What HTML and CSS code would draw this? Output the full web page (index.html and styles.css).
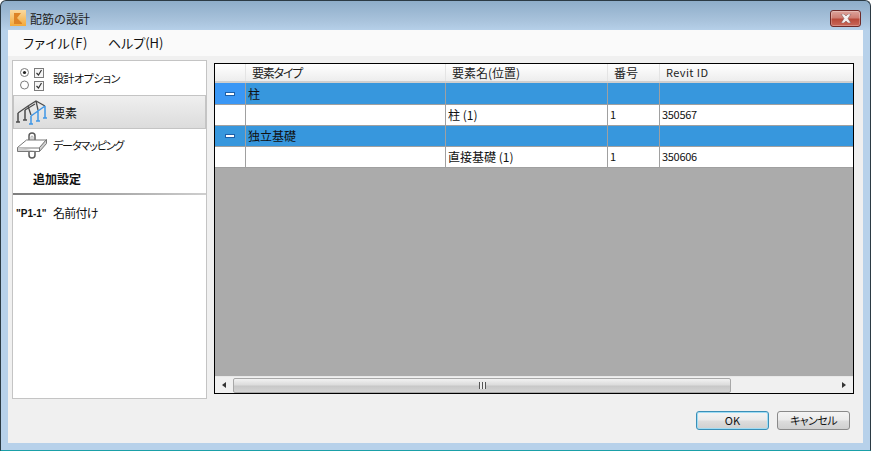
FILE: index.html
```html
<!DOCTYPE html>
<html lang="ja">
<head>
<meta charset="utf-8">
<title>配筋の設計</title>
<link rel="stylesheet" href="styles.css">
</head>
<body>
<div class="window">
  <div class="titlebar">
    <svg class="appicon" width="16" height="16" viewBox="0 0 16 16">
      <defs><linearGradient id="ag" x1="0" y1="0" x2="0" y2="1"><stop offset="0" stop-color="#f9d9a0"/><stop offset="1" stop-color="#f3a93a"/></linearGradient></defs>
      <rect width="16" height="16" fill="url(#ag)"/>
      <path d="M4 3h7L7 8l5 5v1H4z" fill="#dd8326"/>
    </svg>
    <span class="title">配筋の設計</span>
    <div class="close"><svg width="12" height="9" viewBox="0 0 12 9"><path d="M1 0h3l2 2 2-2h3L8 4.500 11 9H8L6 7 4 9H1l3-4.500z" fill="#f4f0f0" stroke="#7a4a48" stroke-width=".5"/></svg></div>
  </div>
  <div class="client">
    <div class="menubar"><span class="menu menu-file">ファイル(F)</span><span class="menu">ヘルプ(H)</span></div>
    <div class="main">
      <div class="sidebar">
        <div class="nav nav-options">
          <svg width="27" height="32" viewBox="0 0 27 32" class="navicon-options">
            <g fill="#fff" stroke="#7c7c7c">
              <circle cx="5.500" cy="10.500" r="4"/><circle cx="5.500" cy="23" r="4"/>
              <rect x="15.500" y="6.500" width="9" height="9" fill="#f6f6f6"/><rect x="15.500" y="19.500" width="9" height="9" fill="#f6f6f6"/>
            </g>
            <circle cx="5.500" cy="10.500" r="1.600" fill="#222"/>
            <path d="M17.500 11l2 2 3-5M17.500 24l2 2 3-5" fill="none" stroke="#333" stroke-width="1.200"/>
          </svg>
          <span class="tight-a">設計オプション</span>
        </div>
        <div class="nav nav-selected">
          <svg width="36" height="32" viewBox="0 0 36 32" class="navicon">
            <path d="M2 17L12 10 20 5l9 5M9 14l10-6M12 10l3 9M20 5l2 9" fill="none" stroke="#4c4c4c" stroke-width="1.300"/>
            <path d="M2 17v9M0 26h4M9 14v10M7 24h4" fill="none" stroke="#4c4c4c" stroke-width="1.500"/>
            <path d="M15 20l14-10M15 20v8M13 28h4M22 14v11M20 25h4M29 10v12M27 22h4" fill="none" stroke="#3f96e6" stroke-width="1.500"/>
          </svg>
          <span>要素</span>
        </div>
        <div class="nav nav-map">
          <svg width="36" height="32" viewBox="0 0 36 32" class="navicon">
            <path d="M13 12V7a3 3 0 0 1 6 0v6" fill="none" stroke="#5c5c5c" stroke-width="1.500"/>
            <path d="M15 11V8a1 1 0 0 1 2 0v3" fill="none" stroke="#aaa"/>
            <path d="M1.500 18.500l9-7.500h20l-7 8H1.500z" fill="#fff" stroke="#777"/>
            <path d="M1.500 18.500v4h22v-4l7-8v4l-7 8" fill="#cfcfcf" stroke="#777"/>
            <path d="M13 23v3a3 3 0 0 0 6 0v-3" fill="none" stroke="#5c5c5c" stroke-width="1.500"/>
          </svg>
          <span class="tight-b">データマッピング</span>
        </div>
        <div class="section">追加設定</div>
        <div class="nav nav-name"><b class="p1">"P1-1"</b><span class="tight-c">名前付け</span></div>
      </div>
      <div class="grid">
        <div class="row header">
          <div class="c c0"></div><div class="c c1 hd-type">要素タイプ</div><div class="c c2">要素名(位置)</div><div class="c c3">番号</div><div class="c c4">Revit ID</div>
        </div>
        <div class="row group first">
          <div class="c c0 c0-active"><i class="minus"></i></div><div class="c c1">柱</div><div class="c c2"></div><div class="c c3"></div><div class="c c4"></div>
        </div>
        <div class="row">
          <div class="c c0"></div><div class="c c1"></div><div class="c c2">柱 (1)</div><div class="c c3 num">1</div><div class="c c4 num">350567</div>
        </div>
        <div class="row group">
          <div class="c c0"><i class="minus"></i></div><div class="c c1">独立基礎</div><div class="c c2"></div><div class="c c3"></div><div class="c c4"></div>
        </div>
        <div class="row">
          <div class="c c0"></div><div class="c c1"></div><div class="c c2">直接基礎 (1)</div><div class="c c3 num">1</div><div class="c c4 num">350606</div>
        </div>
        <div class="empty"></div>
        <div class="scrollbar">
          <div class="arrow arrow-left"></div>
          <div class="thumb"><span class="grip"></span></div>
          <div class="track"></div>
          <div class="arrow arrow-right"></div>
        </div>
      </div>
    </div>
    <div class="footer">
      <button class="btn btn-ok">OK</button>
      <button class="btn btn-cancel">キャンセル</button>
    </div>
  </div>
</div>
</body>
</html>
```
FILE: styles.css
```css
* { box-sizing: border-box; }
html, body { margin: 0; padding: 0; width: 871px; height: 451px; overflow: hidden; background: #fff; }
body { font-family: "Noto Sans CJK JP", "Liberation Sans", sans-serif; font-size: 12px; color: #111; font-feature-settings: "palt"; }
.window {
  width: 871px; height: 451px; display: flex; flex-direction: column;
  border: 1px solid #2b3a44; border-radius: 6px 6px 0 0; border-bottom-color: #1aa0a8;
  background: linear-gradient(#8eadc9 0, #a9c3dc 20px, #b7d1ea 30px);
  padding: 0 7px 7px;
}
.titlebar { height: 29px; flex: none; display: flex; align-items: center; padding: 0 0 0 2px; }
.appicon { flex: none; margin-top: 5px; }
.title { margin-left: 4px; font-size: 12px; color: #222; margin-top: 5px; font-feature-settings: normal; }
.close {
  margin-left: auto; margin-right: 2px; width: 31px; height: 17px; flex: none;
  align-self: flex-start; margin-top: 9px;
  display: flex; align-items: center; justify-content: center;
  border: 1px solid #6e2a28; border-radius: 3px;
  box-shadow: inset 0 0 0 1px rgba(255,255,255,.25);
  background: linear-gradient(#dca49c 0, #cf7f74 45%, #b84a3a 55%, #c9685a 100%);
}
.client { flex: 1; background: #f0f0f0; display: flex; flex-direction: column; min-height: 0; }
.menubar { height: 26px; flex: none; background: #fafafa; display: flex; align-items: center; padding-left: 15px; gap: 20px; }
.menu { font-size: 13px; color: #111; line-height: 24px; }
.menu-file { letter-spacing: .55px; }
.main { display: flex; flex: none; height: 343px; padding: 4px 9px 0 4px; gap: 7px; }
.sidebar { width: 195px; height: 339px; background: #fff; border: 1px solid #c4c4c4; flex: none; }
.nav { display: flex; align-items: center; font-size: 12px; }
.tight-a { font-size: 11px; letter-spacing: -.5px; }
.tight-b { font-size: 11px; letter-spacing: -1.1px; }
.tight-c { letter-spacing: -.7px; }
.nav-options { height: 34px; padding-left: 6px; }
.navicon-options { flex: none; margin-right: 7px; }
.nav-selected { height: 34px; background: linear-gradient(#efefef, #dcdcdc); border: 1px solid #c4c4c4; padding-left: 2px; }
.navicon { flex: none; margin-right: 1px; }
.nav-map { height: 31px; padding-left: 3px; }
.section { height: 35px; padding: 10px 0 0 20px; font-weight: 700; font-size: 12px; line-height: 17px; border-bottom: 2px solid; border-image: linear-gradient(90deg, #7d7d7d, #cfcfcf) 1; font-feature-settings: normal; }
.nav-name { height: 34px; padding-left: 3px; }
.p1 { font-family: "Liberation Sans", sans-serif; font-size: 10px; width: 37px; flex: none; margin-top: 3px; }
.grid { width: 640px; height: 331px; margin-top: 3px; border: 1px solid #000; background: #ababab; display: flex; flex-direction: column; flex: none; font-size: 12px; }
.row { display: flex; height: 21px; flex: none; background: #fff; border-bottom: 1px solid #a0a0a0; }
.first { height: 22px; }
.c { border-right: 1px solid #a0a0a0; padding-left: 2px; line-height: 19px; white-space: nowrap; overflow: hidden; }
.first .c { line-height: 21px; }
.num { font-size: 11px; letter-spacing: -.3px; }
.c0 { width: 31px; flex: none; display: flex; align-items: center; justify-content: center; padding: 0; }
.c1 { width: 200px; flex: none; }
.c2 { width: 162px; flex: none; }
.c3 { width: 52px; flex: none; }
.c4 { flex: 1; border-right: 0; }
.header { height: 19px; background: linear-gradient(#ffffff 0, #f6f6f6 50%, #ededed 100%); border-bottom: 2px solid #cfcfcf; }
.header .c { border-right: 1px solid #e4e4e4; line-height: 17px; padding-left: 6px; color: #222; }
.header .c4 { border-right: 0; font-size: 11px; letter-spacing: .4px; }
.header .hd-type { letter-spacing: -1.2px; }
.group { background: #3797dd; }
.c0-active { background: #3a97f5; }
.minus { display: block; width: 10px; height: 4px; background: #fff; border: 1px solid #1d5fa8; }
.empty { flex: 1; }
.scrollbar { height: 17px; flex: none; background: #f0f0f0; display: flex; align-items: center; border-top: 1px solid #e8e8e8; }
.arrow { width: 18px; height: 16px; flex: none; display: flex; align-items: center; justify-content: center; }
.arrow::before { content: ""; border: 3px solid transparent; }
.arrow-left::before { border-right: 4px solid #333; border-left-width: 0; }
.arrow-right::before { border-left: 4px solid #333; border-right-width: 0; }
.thumb { width: 498px; height: 15px; flex: none; border: 1px solid #a8a8a8; border-radius: 2px; background: linear-gradient(#f2f2f2, #dcdcdc 45%, #c8c8c8 55%, #d4d4d4); display: flex; align-items: center; justify-content: center; }
.grip { width: 7px; height: 7px; background: repeating-linear-gradient(90deg, #555 0 1px, #eee 1px 3px); }
.track { flex: 1; }
.footer { flex: 1; display: flex; justify-content: flex-end; align-items: flex-start; gap: 8px; padding: 12px 13px 0 0; }
.btn { width: 73px; height: 19px; padding: 0; border: 1px solid #8a8a8a; border-radius: 3px; background: linear-gradient(#f4f4f4, #ebebeb 45%, #dcdcdc 55%, #cfcfcf); font-family: inherit; font-feature-settings: inherit; font-size: 11px; color: #111; line-height: 17px; }
.btn-cancel { letter-spacing: -.6px; }
.btn-ok { border-color: #3a8fb7; box-shadow: inset 0 0 0 1px #9fdcf4; }
```
